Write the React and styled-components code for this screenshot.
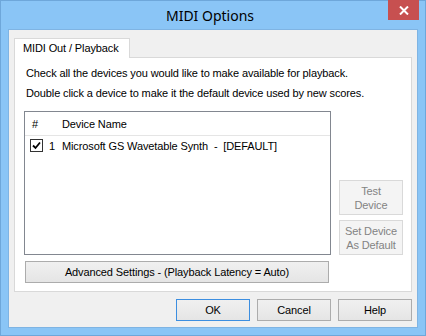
import React from 'react';
import styled, { createGlobalStyle } from 'styled-components';

const GlobalStyle = createGlobalStyle`
body {
  margin: 0;
  background: #ffffff;
}
`;

const Window = styled.div`
width: 426px;
height: 336px;
box-sizing: border-box;
background: #8ac5f6;
border: 1px solid #6ea7da;
display: flex;
flex-direction: column;
font-family: "Liberation Sans", Arial, sans-serif;
font-size: 11px;
letter-spacing: -0.12px;
color: #000;
`;

const TitleBar = styled.div`
height: 28px;
display: grid;
grid-template-columns: 1fr auto 1fr;
align-items: start;
padding-right: 6px;
`;

const Title = styled.div`
grid-column: 2;
font-family: "Noto Sans", "Open Sans", sans-serif;
font-size: 14px;
letter-spacing: 0;
line-height: 29px;
color: #000;
`;

const CloseButton = styled.button`
grid-column: 3;
justify-self: end;
width: 31px;
height: 20px;
margin-top: -1px;
padding: 0;
border: 0;
background: #c75050;
display: flex;
align-items: center;
justify-content: center;
`;

const Client = styled.div`
flex: 1;
margin: 0 7px 7px;
background: #f0f0f0;
border: 1px solid #7fb4e3;
padding: 8px 5px 6px 5px;
display: flex;
flex-direction: column;
`;

const TabStrip = styled.div`
display: flex;
`;

const Tab = styled.div`
position: relative;
z-index: 1;
height: 20px;
box-sizing: border-box;
margin-bottom: -1px;
padding: 0 10px 0 8px;
background: #fff;
border: 1px solid #d9d9d9;
border-bottom: 0;
line-height: 19px;
`;

const Panel = styled.div`
flex: 1;
background: #fff;
border: 1px solid #d9d9d9;
padding: 5px 8px 8px 9px;
display: flex;
flex-direction: column;
`;

const Hint = styled.div`
line-height: 20px;
padding-left: 2px;
`;

const Middle = styled.div`
display: flex;
gap: 8px;
margin-top: 8px;
height: 144px;
`;

const ListBox = styled.div`
flex: 1;
border: 1px solid #828790;
background: #fff;
display: flex;
flex-direction: column;
`;

const ListHeader = styled.div`
height: 23px;
border-bottom: 1px solid #e5e5e5;
display: flex;
align-items: center;
`;

const Row = styled.div`
height: 17px;
margin-top: 1px;
display: flex;
align-items: center;
`;

const NumCell = styled.div`
width: 31px;
box-sizing: border-box;
display: flex;
align-items: center;
padding-left: ${({ $header }) => ($header ? '7px' : '5px')};
gap: 6px;
`;

const NameCell = styled.div`
padding-left: 6px;
white-space: pre;
`;

const Check = styled.span`
width: 13px;
height: 13px;
box-sizing: border-box;
border: 1px solid #333;
background: #fff;
display: flex;
align-items: center;
justify-content: center;
`;

const SideButtons = styled.div`
width: 64px;
display: flex;
flex-direction: column;
justify-content: flex-end;
gap: 5px;
`;

const Button = styled.button`
box-sizing: border-box;
height: ${({ $h }) => $h || 22}px;
width: ${({ $w }) => ($w ? `${$w}px` : 'auto')};
padding: 0;
font-family: "Liberation Sans", Arial, sans-serif;
font-size: 11px;
letter-spacing: -0.12px;
line-height: 14px;
color: ${({ disabled }) => (disabled ? '#838383' : '#000')};
background: ${({ disabled }) =>
    disabled ? '#f4f4f4' : 'linear-gradient(#f0f0f0, #e5e5e5)'};
border: 1px solid
  ${({ disabled, $default }) =>
    disabled ? '#d9d9d9' : $default ? '#3c8ee0' : '#acacac'};
`;

const WideButton = styled(Button)`
margin: 6px 0 0 1px;
width: 304px;
`;

const Footer = styled.div`
display: flex;
justify-content: flex-end;
gap: 7px;
margin-top: 7px;
`;

const CheckMark = () => (
  <svg width="9" height="9" viewBox="0 0 9 9">
    <path d="M1 4.5 L3.5 7 L8 1.5" fill="none" stroke="#000" strokeWidth="1.8" />
  </svg>
);

const CloseIcon = () => (
  <svg width="10" height="9" viewBox="0 0 10 9">
    <path d="M1 0.5 L9 8.5 M9 0.5 L1 8.5" stroke="#fff" strokeWidth="2" />
  </svg>
);

const App = () => (
  <>
    <GlobalStyle />
    <Window>
      <TitleBar>
        <Title>MIDI Options</Title>
        <CloseButton aria-label="Close">
          <CloseIcon />
        </CloseButton>
      </TitleBar>
      <Client>
        <TabStrip>
          <Tab>MIDI Out / Playback</Tab>
        </TabStrip>
        <Panel>
          <Hint>Check all the devices you would like to make available for playback.</Hint>
          <Hint>Double click a device to make it the default device used by new scores.</Hint>
          <Middle>
            <ListBox>
              <ListHeader>
                <NumCell $header>#</NumCell>
                <NameCell>Device Name</NameCell>
              </ListHeader>
              <Row>
                <NumCell>
                  <Check>
                    <CheckMark />
                  </Check>
                  1
                </NumCell>
                <NameCell>Microsoft GS Wavetable Synth  -  [DEFAULT]</NameCell>
              </Row>
            </ListBox>
            <SideButtons>
              <Button disabled $h={35}>Test<br />Device</Button>
              <Button disabled $h={35}>Set Device<br />As Default</Button>
            </SideButtons>
          </Middle>
          <WideButton>Advanced Settings - (Playback Latency = Auto)</WideButton>
        </Panel>
        <Footer>
          <Button $w={74} $default>OK</Button>
          <Button $w={74}>Cancel</Button>
          <Button $w={74}>Help</Button>
        </Footer>
      </Client>
    </Window>
  </>
);

export default App;
